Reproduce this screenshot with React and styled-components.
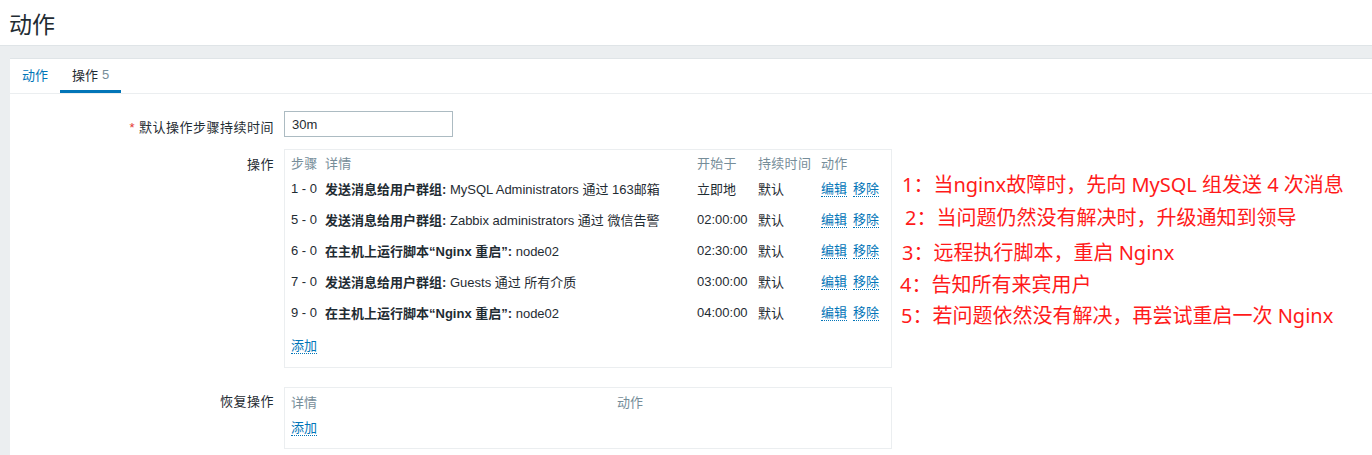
import React from "react";
import styled, { createGlobalStyle } from "styled-components";

const Global = createGlobalStyle`
  html, body { margin: 0; padding: 0; background: #ebeef0; }
  body {
    font-family: "Liberation Sans", Arial, "Noto Sans CJK SC", sans-serif;
    font-size: 13px;
    color: #1f2c33;
  }
`;

const Page = styled.div`
  width: 1372px;
  height: 455px;
  overflow: hidden;
  background: #ebeef0;
`;

const Header = styled.header`
  height: 46px;
  background: #fff;
  border-bottom: 1px solid #dfe4e7;
  box-sizing: border-box;
  display: flex;
  align-items: center;
  padding-left: 9px;
`;

const Title = styled.h1`
  margin: 0;
  font-size: 23px;
  font-weight: normal;
  color: #1f2c33;
  font-family: "Liberation Sans", "Noto Sans CJK SC", sans-serif;
`;

const Body = styled.main`
  padding: 12px 0 0 10px;
`;

const Panel = styled.section`
  background: #fff;
  border-top: 1px solid #dfe4e7;
  min-height: 400px;
`;

const TabBar = styled.nav`
  display: flex;
  height: 34px;
  border-bottom: 1px solid #ebeef0;
`;

const Tab = styled.a`
  display: flex;
  align-items: center;
  padding: 0 12px;
  color: ${(p) => (p.$active ? "#1f2c33" : "#0275b8")};
  border-bottom: 3px solid ${(p) => (p.$active ? "#0275b8" : "transparent")};
  box-sizing: border-box;
  height: 34px;
  cursor: pointer;
`;

const Count = styled.span`
  color: #768d99;
  margin-left: 4px;
`;

const Form = styled.div`
  display: grid;
  grid-template-columns: 264px auto;
  column-gap: 10px;
  padding-top: 17px;
  align-items: start;
`;

const Label = styled.div`
  text-align: right;
  padding-top: ${(p) => p.$top || 6}px;
  white-space: nowrap;
  letter-spacing: 0.5px;
`;

const Star = styled.span`
  color: #e33734;
  margin-right: 4px;
`;

const Field = styled.div`
  margin-bottom: ${(p) => p.$mb || 12}px;
  display: flex;
  align-items: flex-start;
`;

const Input = styled.input`
  width: 169px;
  height: 26px;
  box-sizing: border-box;
  border: 1px solid #acbbc2;
  padding: 0 7px;
  font-family: inherit;
  font-size: 13px;
  color: #1f2c33;
  outline: none;
`;

const Box = styled.div`
  width: 608px;
  border: 1px solid #ebeef0;
  box-sizing: border-box;
  padding: 2px 6px ${(p) => p.$pb || 2}px;
`;

const OpsGrid = styled.div`
  display: grid;
  grid-template-columns: 34px 372px 61px 63px auto;
`;

const HeadCell = styled.div`
  color: #768d99;
  height: 21px;
  display: flex;
  align-items: center;
  letter-spacing: 0.3px;
`;

const Cell = styled.div`
  height: 31px;
  display: flex;
  align-items: center;
  white-space: pre;
`;

const Strong = styled.b`
  font-weight: bold;
`;

const Link = styled.a`
  color: #0275b8;
  border-bottom: 1px dotted #0275b8;
  line-height: 15px;
  margin-right: ${(p) => p.$mr || 0}px;
  cursor: pointer;
`;

const AddRow = styled.div`
  height: ${(p) => p.$h}px;
  display: flex;
  align-items: center;
`;

const RecGrid = styled.div`
  display: grid;
  grid-template-columns: 326px auto;
`;

const RecHead = styled.div`
  color: #768d99;
  height: 22px;
  display: flex;
  align-items: center;
`;

const Notes = styled.ol`
  list-style: none;
  margin: 0;
  padding: 17px 0 0 0;
  font-family: "Noto Sans", "Noto Sans CJK SC", sans-serif;
  font-size: 20px;
  color: #ff1a1a;
`;

const Note = styled.li`
  height: ${(p) => p.$h}px;
  display: flex;
  align-items: center;
  margin-left: ${(p) => p.$x}px;
  white-space: nowrap;
`;

const ops = [
  ["1 - 0", "发送消息给用户群组:", " MySQL Administrators 通过 163邮箱", "立即地"],
  ["5 - 0", "发送消息给用户群组:", " Zabbix administrators 通过 微信告警", "02:00:00"],
  ["6 - 0", "在主机上运行脚本“Nginx 重启”:", " node02", "02:30:00"],
  ["7 - 0", "发送消息给用户群组:", " Guests 通过 所有介质", "03:00:00"],
  ["9 - 0", "在主机上运行脚本“Nginx 重启”:", " node02", "04:00:00"],
];

const notes = [
  ["1：当nginx故障时，先向 MySQL 组发送 4 次消息", 10, 34],
  ["2：当问题仍然没有解决时，升级通知到领导", 13, 32],
  ["3：远程执行脚本，重启 Nginx", 10, 38],
  ["4：告知所有来宾用户", 8, 26],
  ["5：若问题依然没有解决，再尝试重启一次 Nginx", 9, 36],
];

export default function App() {
  return (
    <Page>
      <Global />
      <Header>
        <Title>动作</Title>
      </Header>
      <Body>
        <Panel>
          <TabBar>
            <Tab>动作</Tab>
            <Tab $active>
              操作<Count>5</Count>
            </Tab>
          </TabBar>
          <Form>
            <Label>
              <Star>*</Star>默认操作步骤持续时间
            </Label>
            <Field>
              <Input defaultValue="30m" />
            </Field>

            <Label $top={5}>操作</Label>
            <Field $mb={19}>
              <Box $pb={3}>
                <OpsGrid>
                  <HeadCell>步骤</HeadCell>
                  <HeadCell>详情</HeadCell>
                  <HeadCell>开始于</HeadCell>
                  <HeadCell>持续时间</HeadCell>
                  <HeadCell>动作</HeadCell>
                  {ops.map(([step, bold, rest, start]) => (
                    <React.Fragment key={step}>
                      <Cell>{step}</Cell>
                      <Cell>
                        <span>
                          <Strong>{bold}</Strong>
                          {rest}
                        </span>
                      </Cell>
                      <Cell>{start}</Cell>
                      <Cell>默认</Cell>
                      <Cell>
                        <Link $mr={6}>编辑</Link>
                        <Link>移除</Link>
                      </Cell>
                    </React.Fragment>
                  ))}
                </OpsGrid>
                <AddRow $h={36}>
                  <Link>添加</Link>
                </AddRow>
              </Box>
              <Notes>
                {notes.map(([t, x, h]) => (
                  <Note key={t} $x={x} $h={h}>
                    {t}
                  </Note>
                ))}
              </Notes>
            </Field>

            <Label $top={4}>恢复操作</Label>
            <Field>
              <Box $pb={5}>
                <RecGrid>
                  <RecHead>详情</RecHead>
                  <RecHead>动作</RecHead>
                </RecGrid>
                <AddRow $h={31}>
                  <Link>添加</Link>
                </AddRow>
              </Box>
            </Field>
          </Form>
        </Panel>
      </Body>
    </Page>
  );
}
